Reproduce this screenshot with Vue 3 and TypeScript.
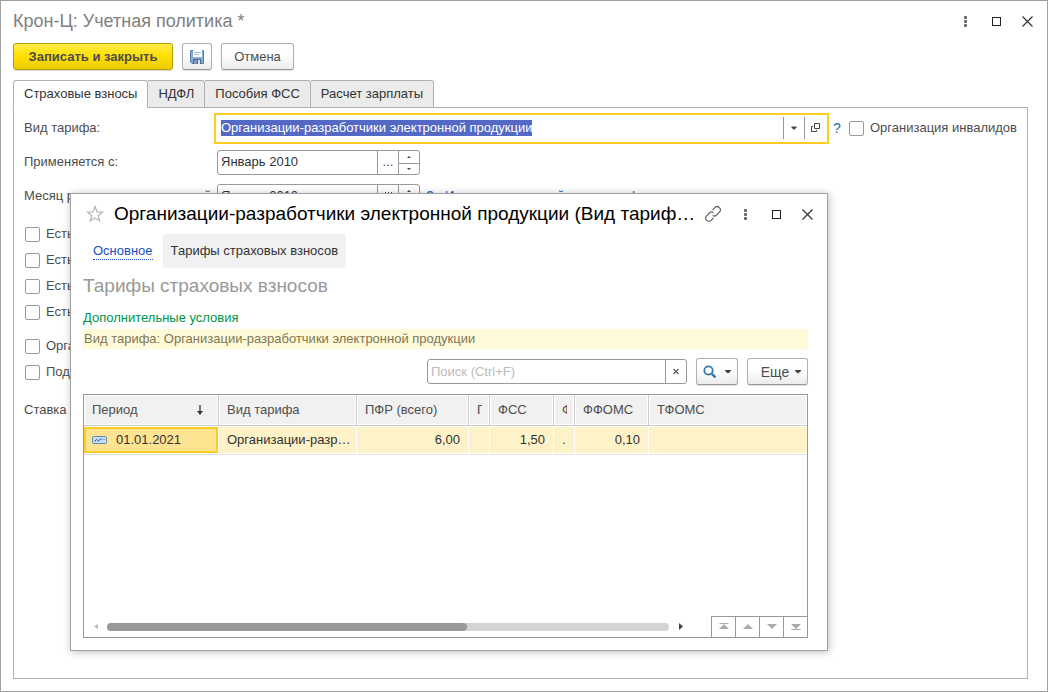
<script setup lang="ts">
import { onMounted, ref } from 'vue'

interface Column {
  key: string
  title: string
  cls: string
  numeric?: boolean
}

const tabs: string[] = ['Страховые взносы', 'НДФЛ', 'Пособия ФСС', 'Расчет зарплаты']
const activeTab = ref(0)

const tariff = ref('Организации-разработчики электронной продукции')
const appliedFrom = ref('Январь 2010')
const changeMonth = ref('Январь 2010')
const search = ref('')
const tariffInput = ref<HTMLInputElement | null>(null)

const flagGroups: string[][] = [
  ['Есть', 'Есть', 'Есть', 'Есть'],
  ['Орга', 'Под'],
]

const columns: Column[] = [
  { key: 'period', title: 'Период', cls: 'c-period' },
  { key: 'kind', title: 'Вид тарифа', cls: 'c-kind' },
  { key: 'pfr', title: 'ПФР (всего)', cls: 'c-pfr', numeric: true },
  { key: 'pfr2', title: 'П', cls: 'c-narrow' },
  { key: 'fss', title: 'ФСС', cls: 'c-fss', numeric: true },
  { key: 'fss2', title: 'Ф', cls: 'c-narrow' },
  { key: 'ffoms', title: 'ФФОМС', cls: 'c-ffoms', numeric: true },
  { key: 'tfoms', title: 'ТФОМС', cls: 'c-rest' },
]

const rows: Record<string, string>[] = [
  { period: '01.01.2021', kind: 'Организации-разработчики', pfr: '6,00', pfr2: '', fss: '1,50', fss2: '.', ffoms: '0,10', tfoms: '' },
]

onMounted(() => {
  tariffInput.value?.focus()
  tariffInput.value?.select()
})
</script>

<template>
  <main class="window">
    <header class="titlebar">
      <h1>Крон-Ц: Учетная политика *</h1>
      <div class="winbtns">
        <button type="button" aria-label="Меню"><svg width="16" height="16"><g fill="#666"><rect x="7" y="3" width="3" height="3" rx="1" /><rect x="7" y="7" width="3" height="3" rx="1" /><rect x="7" y="11" width="3" height="3" rx="1" /></g></svg></button>
        <button type="button" aria-label="Развернуть"><svg width="16" height="16"><rect x="4.5" y="4.5" width="8" height="8" fill="none" stroke="#222" /></svg></button>
        <button type="button" aria-label="Закрыть"><svg width="16" height="16"><path d="M3.5 3.5l10 10M13.5 3.5l-10 10" stroke="#333" stroke-width="1.2" /></svg></button>
      </div>
    </header>

    <div class="commands">
      <button type="button" class="btn primary">Записать и закрыть</button>
      <button type="button" class="btn icon" aria-label="Записать">
        <svg width="16" height="16">
          <path d="M1.5 1.5h13v13H3L1.5 13z" fill="#86acd4" stroke="#5580b0" />
          <rect x="4" y="1" width="9" height="7" fill="#fff" />
          <path d="M5 3.5h7M5 5.5h5" stroke="#a9bccf" />
          <rect x="4" y="10" width="8" height="5" fill="#48698f" />
          <rect x="5" y="11" width="3" height="4" fill="#7d98b6" />
          <rect x="9" y="11" width="2" height="4" fill="#dce5ef" />
        </svg>
      </button>
      <button type="button" class="btn cancel">Отмена</button>
    </div>

    <div class="tabs" role="tablist">
      <button v-for="(t, i) in tabs" :key="t" type="button" role="tab" class="tab" :class="{ active: i === activeTab }" :aria-selected="i === activeTab" @click="activeTab = i">{{ t }}</button>
    </div>

    <section class="panel">
      <div class="row">
        <label class="lbl" for="tariff">Вид тарифа:</label>
        <div class="focusbox">
          <input id="tariff" ref="tariffInput" v-model="tariff" type="text" />
          <button type="button" aria-label="Выбрать"><svg width="20" height="22"><path d="M7.5 9.5h5v1l-2.5 2.5l-2.5-2.5z" fill="#444" /></svg></button>
          <button type="button" aria-label="Открыть"><svg width="20" height="22"><path d="M9.500 6.500h5v5h-5zM8 9.500H6.500v5h5V13" fill="none" stroke="#444" /></svg></button>
        </div>
        <a class="help" href="#">?</a>
        <label class="check"><input type="checkbox" /><span>Организация инвалидов</span></label>
      </div>
      <div class="row">
        <label class="lbl" for="from">Применяется с:</label>
        <div class="field">
          <input id="from" v-model="appliedFrom" type="text" />
          <button type="button" aria-label="Выбрать период">...</button>
          <div class="spin">
            <button type="button" aria-label="Больше"><svg width="20" height="11"><path d="M8 7h4l-2-2z" fill="#444" /></svg></button>
            <button type="button" aria-label="Меньше"><svg width="20" height="11"><path d="M8 4h4l-2 2z" fill="#444" /></svg></button>
          </div>
        </div>
      </div>
      <div class="row">
        <label class="lbl" for="change">Месяц регистрации изменений:</label>
        <div class="field">
          <input id="change" v-model="changeMonth" type="text" />
          <button type="button" aria-label="Календарь"><svg width="20" height="23"><rect x="5.5" y="8.5" width="9" height="8" fill="none" stroke="#444" /><path d="M6 10h9M7.5 7v3M10.5 7v3M13.5 7v3" stroke="#444" /></svg></button>
          <div class="spin">
            <button type="button" aria-label="Больше"><svg width="20" height="11"><path d="M8 7h4l-2-2z" fill="#444" /></svg></button>
            <button type="button" aria-label="Меньше"><svg width="20" height="11"><path d="M8 4h4l-2 2z" fill="#444" /></svg></button>
          </div>
        </div>
        <a class="help" href="#">?</a>
        <a class="history" href="#">История изменений вида тарифа</a>
      </div>
      <div v-for="(group, g) in flagGroups" :key="g" class="flags">
        <label v-for="(f, i) in group" :key="i" class="check"><input type="checkbox" /><span>{{ f }}</span></label>
      </div>
      <div class="row rate"><span class="lbl">Ставка</span></div>
    </section>

    <section class="dialog" role="dialog" aria-labelledby="dlg-title">
      <header class="dlghead">
        <button type="button" class="star" aria-label="В избранное"><svg width="18" height="18"><path d="M9 1.500l2.100 5.400 5.400.3-4.300 3.500 1.500 5.300L9 13l-4.700 3 1.500-5.300L1.500 7.200l5.400-.3z" fill="none" stroke="#b3b7bd" stroke-width="1.200" /></svg></button>
        <h2 id="dlg-title">Организации-разработчики электронной продукции (Вид тарифа страховых взносов)</h2>
        <div class="winbtns">
          <button type="button" aria-label="Ссылка"><svg width="18" height="18" viewBox="0 0 18 18"><g transform="rotate(-45 9 9)" fill="none" stroke="#666" stroke-width="1.200"><path d="M6.500 12.200H3.200a3.200 3.200 0 0 1 0-6.400h4a3.200 3.200 0 0 1 3.100 2.400" /><path d="M11.500 5.800h3.300a3.200 3.200 0 0 1 0 6.400h-4a3.200 3.200 0 0 1-3.100-2.400" /></g></svg></button>
          <button type="button" aria-label="Меню"><svg width="16" height="16"><g fill="#666"><rect x="7" y="3" width="3" height="3" rx="1" /><rect x="7" y="7" width="3" height="3" rx="1" /><rect x="7" y="11" width="3" height="3" rx="1" /></g></svg></button>
          <button type="button" aria-label="Развернуть"><svg width="16" height="16"><rect x="4.5" y="4.5" width="8" height="8" fill="none" stroke="#222" /></svg></button>
          <button type="button" aria-label="Закрыть"><svg width="16" height="16"><path d="M3.5 3.5l10 10M13.5 3.5l-10 10" stroke="#333" stroke-width="1.2" /></svg></button>
        </div>
      </header>
      <nav class="dlgnav">
        <a class="main-link" href="#">Основное</a>
        <a class="current" href="#">Тарифы страховых взносов</a>
      </nav>
      <h3>Тарифы страховых взносов</h3>
      <p class="conditions">Дополнительные условия</p>
      <p class="filter">Вид тарифа: Организации-разработчики электронной продукции</p>
      <div class="toolbar">
        <div class="field search">
          <input v-model="search" type="text" placeholder="Поиск (Ctrl+F)" aria-label="Поиск" />
          <button type="button" aria-label="Очистить"><svg width="20" height="23"><path d="M7.500 9l5 5M12.500 9l-5 5" stroke="#555" stroke-width="1.100" /></svg></button>
        </div>
        <button type="button" class="btn find" aria-label="Найти">
          <svg width="14" height="14"><circle cx="5.500" cy="5.500" r="4.200" fill="none" stroke="#2e77b0" stroke-width="1.800" /><path d="M8.800 8.800l3.700 3.500" stroke="#2e77b0" stroke-width="2.400" /></svg>
          <svg width="6" height="4"><path d="M0 0h6v1L3 3.500L0 1z" fill="#444" /></svg>
        </button>
        <button type="button" class="btn more"><span>Еще</span><svg width="6" height="4"><path d="M0 0h6v1L3 3.500L0 1z" fill="#444" /></svg></button>
      </div>
      <div class="list">
        <table>
          <thead>
            <tr>
              <th v-for="c in columns" :key="c.key" :class="c.cls" scope="col">
                <div class="cell"><span>{{ c.title }}</span><svg v-if="c.key === 'period'" width="8" height="12"><path d="M4 1v9" stroke="#333" stroke-width="1.300" /><path d="M1 7h6l-3 4z" fill="#333" /></svg></div>
              </th>
            </tr>
          </thead>
          <tbody>
            <tr v-for="r in rows" :key="r.period">
              <td v-for="c in columns" :key="c.key" :class="[c.cls, { num: c.numeric, picked: c.key === 'period' }]">
                <div class="cell">
                  <svg v-if="c.key === 'period'" width="16" height="9"><rect x=".5" y=".5" width="14" height="7" rx="1" fill="#c3dff7" stroke="#6788aa" /><path d="M2.500 5.500l2-2 2 1.500 2-2h1.500M11.500 3.500h1" fill="none" stroke="#1f5a91" /></svg>
                  <span>{{ r[c.key] }}</span>
                </div>
              </td>
            </tr>
          </tbody>
        </table>
        <div class="listfoot">
          <svg width="5" height="7"><path d="M5 1v5L1 3.500z" fill="#bbb" /></svg>
          <div class="track"><div class="thumb"></div></div>
          <svg width="5" height="7"><path d="M0 0v7l4-3.500z" fill="#444" /></svg>
          <div class="pager">
            <button type="button" aria-label="В начало"><svg width="12" height="10"><path d="M1.500 1h9v1h-9zM6 2l5 5H1z" fill="#aaa" /></svg></button>
            <button type="button" aria-label="Вверх"><svg width="12" height="10"><path d="M6 2l5 5H1z" fill="#aaa" /></svg></button>
            <button type="button" aria-label="Вниз"><svg width="12" height="10"><path d="M1 2h10l-5 5z" fill="#aaa" /></svg></button>
            <button type="button" aria-label="В конец"><svg width="12" height="10"><path d="M1 2h10l-5 5zM1.500 7h9v1h-9z" fill="#aaa" /></svg></button>
          </div>
        </div>
      </div>
    </section>
  </main>
</template>

<style>
html,
body {
  margin: 0;
  background: #fff;
}
</style>

<style scoped>
* {
  box-sizing: border-box;
}
.window {
  position: relative;
  display: flex;
  flex-direction: column;
  min-height: 100vh;
  padding: 8px 19px 12px 12px;
  border: 1px solid #a0a0a0;
  background: #fff;
  color: #4d4d4d;
  font: 13px/16px 'Liberation Sans', Arial, sans-serif;
  overflow: hidden;
}
button,
input {
  font: inherit;
  color: inherit;
}
button {
  padding: 0;
  border: 0;
  background: none;
}
svg {
  display: block;
  flex: none;
}
h1,
h2,
h3,
p {
  margin: 0;
  font-weight: normal;
}
.titlebar {
  display: flex;
  align-items: center;
  justify-content: space-between;
  height: 24px;
  margin-right: -7px;
}
h1 {
  font-size: 18px;
  line-height: 24px;
  color: #808080;
}
.winbtns {
  display: flex;
  flex: none;
  align-items: center;
  gap: 15px;
}
.commands {
  display: flex;
  gap: 9px;
  margin-top: 10px;
}
.btn {
  display: flex;
  align-items: center;
  justify-content: center;
  height: 27px;
  border: 1px solid #b0b0b0;
  border-bottom-color: #999;
  border-radius: 3px;
  background: linear-gradient(#fff 40%, #ececec);
  box-shadow: 0 1px 1px #ddd;
}
.primary {
  width: 160px;
  border-color: #b39b00;
  background: linear-gradient(#ffed4a, #ffdf00 50%, #edcb00);
  font-weight: bold;
}
.icon {
  width: 30px;
}
.cancel {
  width: 73px;
}
.tabs {
  position: relative;
  z-index: 1;
  display: flex;
  margin-top: 10px;
}
.tab {
  height: 28px;
  padding: 0 10px;
  border: 1px solid #b0b0b0;
  border-left-width: 0;
  border-radius: 0 3px 0 0;
  background: #ebebeb;
  color: #333;
}
.tab.active {
  border-left-width: 1px;
  border-radius: 3px 3px 0 0;
  border-bottom-color: #fff;
  background: #fff;
}
.panel {
  flex: 1;
  margin-top: -1px;
  padding: 3px 10px 8px;
  border: 1px solid #b0b0b0;
}
.row {
  display: flex;
  align-items: center;
  height: 34px;
}
.lbl {
  flex: none;
  width: 193px;
  white-space: nowrap;
}
.focusbox {
  display: flex;
  flex: 1;
  align-items: center;
  height: 31px;
  margin-left: -3px;
  padding-right: 2px;
  border: 2px solid #fc2;
  background: #fff;
}
.focusbox input {
  flex: 1;
  min-width: 0;
  height: 16px;
  padding: 0 5px;
  border: 0;
  outline: 0;
  background: none;
  line-height: 16px;
}
.focusbox input::selection {
  background: #5468c5;
  color: #fff;
}
.focusbox button {
  border-left: 1px solid #999;
}
.help {
  width: 20px;
  padding-left: 4px;
  color: #1371b8;
  font-size: 14px;
  text-decoration: none;
}
.check {
  display: flex;
  align-items: center;
  height: 26px;
  gap: 6px;
  white-space: nowrap;
}
.check input {
  flex: none;
  width: 15px;
  height: 15px;
  margin: 0;
  appearance: none;
  border: 1px solid #999;
  border-radius: 2px;
  background: #fff;
}
.flags {
  margin-top: 8px;
  padding-left: 1px;
}
.rate {
  margin-top: 8px;
}
.field {
  display: flex;
  width: 203px;
  height: 25px;
  border: 1px solid #999;
  border-radius: 3px;
  background: #fff;
  overflow: hidden;
}
.field input {
  flex: 1;
  min-width: 0;
  padding: 0 3px;
  border: 0;
  outline: 0;
  background: none;
  color: #333;
}
.field > button {
  flex: none;
  width: 21px;
  border-left: 1px solid #999;
}
.spin {
  display: flex;
  flex-direction: column;
  width: 21px;
  border-left: 1px solid #999;
}
.spin button {
  height: 12px;
}
.spin button + button {
  height: 11px;
  border-top: 1px solid #999;
}
.history {
  color: #1b4fbb;
  text-decoration: none;
}
.row .field + .help {
  width: 25px;
  padding-left: 6px;
}
.dialog {
  position: absolute;
  top: 192px;
  right: 219px;
  bottom: 40px;
  left: 69px;
  display: flex;
  flex-direction: column;
  padding: 8px 19px 12px 12px;
  border: 1px solid #a0a0a0;
  background: #fff;
  box-shadow: 1px 1px 8px rgba(0, 0, 0, 0.25);
  z-index: 2;
}
.dlghead {
  display: flex;
  align-items: center;
  height: 24px;
  margin-right: -7px;
}
.star {
  margin: 0 10px 0 3px;
}
h2 {
  flex: 1;
  min-width: 0;
  overflow: hidden;
  color: #000;
  font-size: 19px;
  line-height: 24px;
  text-overflow: ellipsis;
  white-space: nowrap;
}
.dlghead .winbtns {
  margin-left: 8px;
}
.dlgnav {
  display: flex;
  align-items: center;
  gap: 10px;
  height: 34px;
  margin-top: 8px;
  padding-left: 10px;
}
.main-link {
  border-bottom: 1px dotted #1b4fbb;
  color: #1b4fbb;
  line-height: 16px;
  text-decoration: none;
}
.current {
  padding: 9px 8px;
  border-radius: 3px;
  background: #f1f1f1;
  color: #333;
  text-decoration: none;
}
h3 {
  margin-top: 6px;
  color: #999;
  font-size: 19px;
  line-height: 24px;
}
.conditions {
  margin-top: 12px;
  color: #00954a;
}
.filter {
  margin-top: 3px;
  padding: 2px 1px;
  background: #fffbd9;
  color: #7f7654;
}
.toolbar {
  display: flex;
  align-items: center;
  justify-content: flex-end;
  gap: 9px;
  margin-top: 9px;
}
.search {
  width: 260px;
}
.search input::placeholder {
  color: #bbb;
  opacity: 1;
}
.find {
  gap: 8px;
  width: 42px;
}
.more {
  gap: 6px;
  width: 61px;
  padding-left: 7px;
  font-size: 14px;
}
.list {
  display: flex;
  flex: 1;
  flex-direction: column;
  justify-content: space-between;
  margin-top: 9px;
  border: 1px solid #999;
}
table {
  width: 100%;
  border-spacing: 0;
  table-layout: fixed;
}
th,
td {
  padding: 0 8px;
  border-right: 1px solid #ccc;
  border-bottom: 1px solid #ccc;
  font-weight: normal;
  text-align: left;
}
th {
  height: 31px;
  background: #f1f1f1;
  box-shadow: inset 0 0 0 1px #fff;
}
td {
  height: 29px;
  border-right-color: #fff;
  border-bottom-color: #e2e2e2;
  background: #fef2c8;
  box-shadow: inset 0 1px #fff, inset 0 -1px #fff;
  color: #333;
}
th:last-child,
td:last-child {
  border-right: 0;
}
td.picked {
  background: #fee391;
  box-shadow: inset 0 1px #fff, inset 0 -1px #fff, inset 2px 0 #fc2, inset -2px 0 #fc2, inset 0 3px #fc2, inset 0 -3px #fc2;
}
.cell {
  display: flex;
  align-items: center;
  gap: 8px;
}
.cell span {
  min-width: 0;
  overflow: hidden;
  text-overflow: ellipsis;
  white-space: nowrap;
}
th .cell {
  justify-content: space-between;
}
th .cell span {
  text-overflow: clip;
}
.num .cell {
  justify-content: flex-end;
}
.c-period { width: 135px; }
th.c-period { padding-right: 14px; }
.c-kind { width: 138px; padding-right: 4px; }
.c-pfr { width: 112px; }
.c-narrow { width: 21px; padding-right: 7px; }
.c-fss { width: 64px; }
.c-ffoms { width: 74px; }
.listfoot {
  display: flex;
  align-items: center;
  height: 21px;
  padding-left: 9px;
}
.track {
  flex: 1;
  height: 8px;
  margin: 0 10px 0 9px;
  border-radius: 4px;
  background: #d4d4d4;
}
.thumb {
  width: 64%;
  height: 8px;
  border-radius: 4px;
  background: #999;
}
.pager {
  display: flex;
  margin-left: 27px;
  border-top: 1px solid #999;
}
.pager button {
  display: flex;
  align-items: center;
  justify-content: center;
  width: 24px;
  height: 20px;
  border-left: 1px solid #999;
}
</style>
